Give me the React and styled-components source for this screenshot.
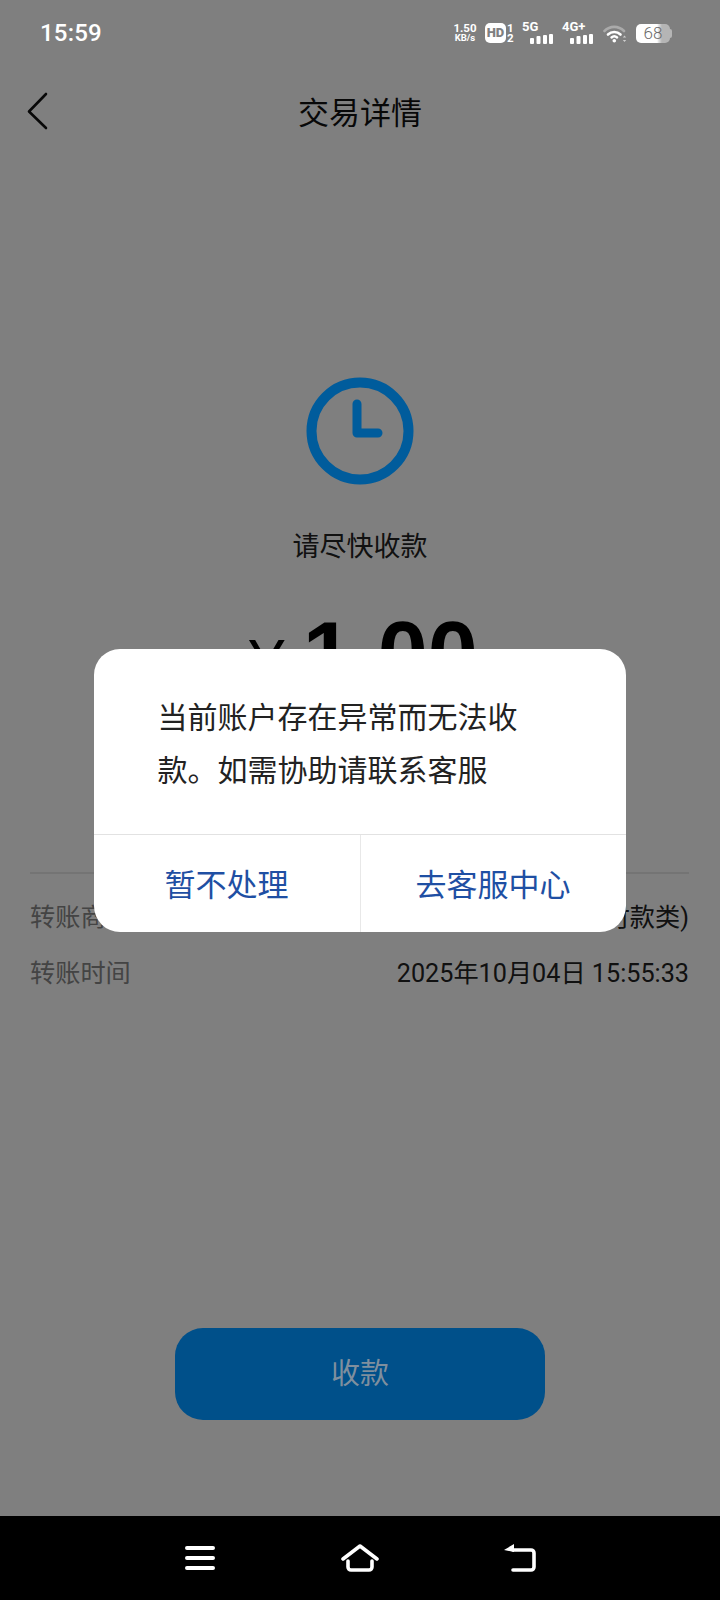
import React from "react";
import styled, { createGlobalStyle } from "styled-components";

const Global = createGlobalStyle`
  html, body { margin: 0; padding: 0; background: #000; }
  * { box-sizing: border-box; }
`;

const CJK = `Roboto, "Noto Sans CJK SC", sans-serif`;

const Screen = styled.div`
  position: relative;
  width: 720px;
  height: 1600px;
  display: flex;
  flex-direction: column;
  background: #fff;
  font-family: ${CJK};
  overflow: hidden;
`;

const Main = styled.div`
  flex: 1;
  display: flex;
  flex-direction: column;
`;

const StatusBar = styled.div`
  position: relative;
  z-index: 2;
  height: 66px;
  display: flex;
  align-items: center;
  justify-content: space-between;
  padding: 0 48px 0 40px;
  color: #fff;
`;

const Time = styled.div`
  font-size: 24px;
  font-weight: 500;
  letter-spacing: 0.2px;
`;

const StatusIcons = styled.div`
  display: flex;
  align-items: center;
`;

const Speed = styled.div`
  display: flex;
  flex-direction: column;
  align-items: center;
  width: 26px;
  margin-right: 7px;
  font-size: 11.5px;
  font-weight: 700;
  line-height: 10px;
  & > small { font-size: 9.5px; }
`;

const HdBadge = styled.div`
  width: 21px;
  height: 20px;
  border-radius: 5px;
  background: #fff;
  color: #808080;
  font-size: 13px;
  font-weight: 900;
  line-height: 20px;
  text-align: center;
`;

const SimDigits = styled.div`
  display: flex;
  flex-direction: column;
  width: 9px;
  padding-left: 1px;
  margin-right: 7px;
  font-size: 11.5px;
  font-weight: 700;
  line-height: 10px;
`;

const Signal = styled.div`
  position: relative;
  width: ${p => p.$w}px;
  height: 22px;
  margin-right: ${p => p.$mr}px;
`;

const SignalLabel = styled.span`
  position: absolute;
  left: 0;
  top: -2px;
  font-size: 13px;
  font-weight: 700;
  line-height: 14px;
`;

const SignalBars = styled.svg`
  position: absolute;
  right: 0;
  bottom: 0;
`;

const BatteryBox = styled.div`
  position: relative;
  width: 34px;
  height: 19px;
  margin: 0 2px 0 9px;
  border-radius: 5px;
  background: linear-gradient(90deg, #fff 0 62%, #e6e6e6 66%, #b5b5b5 76% 100%);
  color: #6a6a6a;
  font-size: 17px;
  font-weight: 300;
  line-height: 19px;
  text-align: center;
`;

const BatteryCap = styled.div`
  position: absolute;
  right: -2px;
  top: 5px;
  width: 2px;
  height: 9px;
  border-radius: 0 2px 2px 0;
  background: #b5b5b5;
`;

const Header = styled.header`
  position: relative;
  height: 88px;
  display: flex;
  align-items: center;
  justify-content: center;
`;

const BackButton = styled.svg`
  position: absolute;
  left: 26px;
  top: 26px;
`;

const Title = styled.h1`
  margin: 0;
  font-size: 31px;
  font-weight: 400;
  color: #111;
`;

const Hero = styled.section`
  display: flex;
  flex-direction: column;
  align-items: center;
  padding-top: 223px;
`;

const ClockIcon = styled.svg`
  position: relative;
  z-index: 2;
`;

const StatusText = styled.div`
  margin-top: 42px;
  font-size: 27px;
  line-height: 40px;
  color: #222;
`;

const Amount = styled.div`
  margin-top: 37px;
  margin-left: 7px;
  height: 100px;
  display: flex;
  align-items: baseline;
  justify-content: center;
  color: #000;
  line-height: 100px;
  font-family: "Liberation Sans", Arial, sans-serif;
`;

const Yen = styled.span`
  font-size: 64px;
  margin-right: 18px;
`;

const Figure = styled.span`
  font-size: 90px;
  font-weight: 700;
`;

const Details = styled.section`
  margin: 168px 31px 0 30px;
  padding-top: 27px;
  border-top: 2px solid #e8e8e8;
  display: flex;
  flex-direction: column;
  gap: 22px;
`;

const DetailRow = styled.div`
  display: flex;
  justify-content: space-between;
  font-size: 25.2px;
  line-height: 34px;
`;

const DetailLabel = styled.span`
  color: #888;
`;

const DetailValue = styled.span`
  color: #222;
`;

const ActionWrap = styled.div`
  position: relative;
  z-index: 2;
  margin-top: auto;
  padding-bottom: 96px;
  display: flex;
  justify-content: center;
`;

const PrimaryButton = styled.button`
  width: 370px;
  height: 92px;
  border: 0;
  border-radius: 28px;
  padding: 0 0 6px;
  background: #00508a;
  color: #7f8f9e;
  font-family: inherit;
  font-size: 29px;
`;

const Scrim = styled.div`
  position: absolute;
  left: 0;
  right: 0;
  top: 0;
  bottom: 84px;
  z-index: 1;
  background: rgba(0, 0, 0, 0.5);
  display: flex;
  justify-content: center;
  padding: 649px 1px 0 0;
`;

const Dialog = styled.div`
  width: 532px;
  height: 283px;
  border-radius: 26px;
  background: #fff;
  display: flex;
  flex-direction: column;
  overflow: hidden;
`;

const DialogBody = styled.div`
  height: 186px;
  padding: 42px 100px 0 64px;
  font-size: 30px;
  line-height: 53px;
  color: #222;
  border-bottom: 1px solid #e2e2e2;
`;

const DialogActions = styled.div`
  flex: 1;
  display: grid;
  grid-template-columns: 266px 1fr;
`;

const DialogAction = styled.button`
  border: 0;
  border-left: ${p => (p.$divided ? "1px solid #e8e8e8" : "0")};
  background: none;
  padding: 0 0 2px;
  color: #1f4fa3;
  font-family: inherit;
  font-size: 31px;
`;

const NavBar = styled.nav`
  height: 84px;
  background: #000;
  display: flex;
  align-items: center;
  justify-content: center;
`;

const NavSlot = styled.div`
  width: 160px;
  display: flex;
  justify-content: center;
`;

const Bars = () => (
  <SignalBars width="23" height="10" viewBox="0 0 23 10" fill="#fff">
    <rect x="0" y="4" width="4" height="6" rx="1" />
    <rect x="6.5" y="2" width="4" height="8" rx="1" />
    <rect x="13" y="1" width="4" height="9" rx="1" />
    <rect x="19" y="0" width="4" height="10" rx="1" />
  </SignalBars>
);

export default function App() {
  return (
    <Screen>
      <Global />
      <Main>
        <StatusBar>
          <Time>15:59</Time>
          <StatusIcons>
            <Speed>
              <span>1.50</span>
              <small>KB/s</small>
            </Speed>
            <HdBadge>HD</HdBadge>
            <SimDigits>
              <span>1</span>
              <span>2</span>
            </SimDigits>
            <Signal $w={31} $mr={9}>
              <SignalLabel>5G</SignalLabel>
              <Bars />
            </Signal>
            <Signal $w={31} $mr={10}>
              <SignalLabel>4G+</SignalLabel>
              <Bars />
            </Signal>
            <svg width="24" height="19" viewBox="0 0 24 19" fill="none" strokeLinecap="round">
              <path d="M1.5 7C7 1.5 15.5 1.5 21 7" stroke="#aaa" strokeWidth="2.6" />
              <path d="M5 10.5C8.5 7.2 14 7.2 17.5 10.5" stroke="#fff" strokeWidth="2.6" />
              <path d="M8.5 13.5c1.6-1.5 4-1.5 5.6 0" stroke="#fff" strokeWidth="2.4" />
              <circle cx="11.3" cy="16.8" r="1.8" fill="#fff" />
              <path d="M21.5 11.5l1.7 2h-3.4zM21.5 18l1.7-2h-3.4z" fill="#ccc" />
            </svg>
            <BatteryBox>
              68
              <BatteryCap />
            </BatteryBox>
          </StatusIcons>
        </StatusBar>
        <Header>
          <BackButton width="22" height="38" viewBox="0 0 22 38" fill="none">
            <path d="M20 2L3 19.5L20 36" stroke="#111" strokeWidth="2.6" strokeLinecap="round" strokeLinejoin="round" />
          </BackButton>
          <Title>交易详情</Title>
        </Header>
        <Hero>
          <ClockIcon width="108" height="108" viewBox="0 0 108 108" fill="none">
            <circle cx="54" cy="54" r="48.5" stroke="#005c9c" strokeWidth="10" />
            <path d="M51 27V56H72" stroke="#005c9c" strokeWidth="9" strokeLinecap="round" strokeLinejoin="round" />
          </ClockIcon>
          <StatusText>请尽快收款</StatusText>
          <Amount>
            <Yen>¥</Yen>
            <Figure>1.00</Figure>
          </Amount>
        </Hero>
        <Details>
          <DetailRow>
            <DetailLabel>转账商户</DetailLabel>
            <DetailValue>付款类)</DetailValue>
          </DetailRow>
          <DetailRow>
            <DetailLabel>转账时间</DetailLabel>
            <DetailValue>2025年10月04日 15:55:33</DetailValue>
          </DetailRow>
        </Details>
        <ActionWrap>
          <PrimaryButton>收款</PrimaryButton>
        </ActionWrap>
      </Main>
      <NavBar>
        <NavSlot>
          <svg width="30" height="26" viewBox="0 0 30 26" fill="none" stroke="#fff" strokeWidth="4" strokeLinecap="round">
            <path d="M2 3H28M2 13H28M2 23H28" />
          </svg>
        </NavSlot>
        <NavSlot>
          <svg width="38" height="28" viewBox="0 0 38 28" fill="none" stroke="#fff" strokeWidth="3.6" strokeLinecap="round" strokeLinejoin="round">
            <path d="M2 15L19 2L36 15" />
            <path d="M7 17V23a3 3 0 0 0 3 3H28a3 3 0 0 0 3-3V17" />
          </svg>
        </NavSlot>
        <NavSlot>
          <svg width="32" height="28" viewBox="0 0 32 28" fill="none">
            <path d="M9 6H27a3 3 0 0 1 3 3V23a3 3 0 0 1-3 3H9" stroke="#fff" strokeWidth="3.6" strokeLinecap="round" />
            <path d="M0 6L10 0V8Z" fill="#fff" />
          </svg>
        </NavSlot>
      </NavBar>
      <Scrim>
        <Dialog>
          <DialogBody>当前账户存在异常而无法收款。如需协助请联系客服</DialogBody>
          <DialogActions>
            <DialogAction>暂不处理</DialogAction>
            <DialogAction $divided>去客服中心</DialogAction>
          </DialogActions>
        </Dialog>
      </Scrim>
    </Screen>
  );
}
